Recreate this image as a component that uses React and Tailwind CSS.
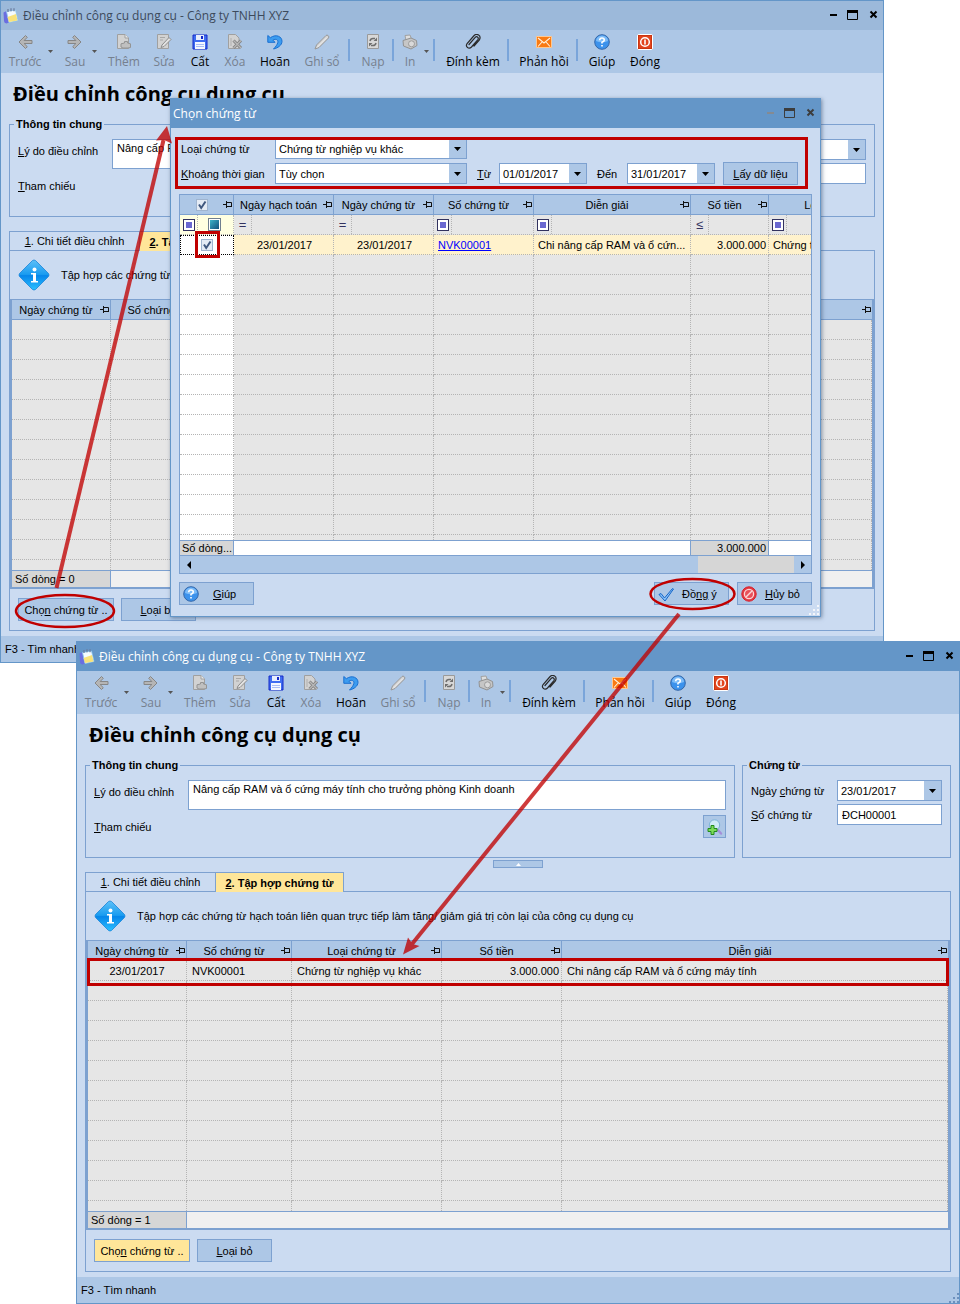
import React from 'react'

const ui = "font-['Liberation_Sans',Arial,sans-serif] text-[11px] leading-4"
const segoe = "font-['Open_Sans','Noto_Sans',sans-serif]"

// toolbar glyphs, all drawn on a 16x16 grid
const icons = {
  back: <path d="M8.5 1.5 2 8l6.5 6.5 1.8-1.8-3.2-3.2H15V6.5H7.1l3.2-3.2z" fill="#b5b5b5" stroke="#868686" strokeLinejoin="round" />,
  next: <path d="M7.5 1.5 14 8l-6.5 6.5-1.8-1.8 3.2-3.2H1V6.5h7.9L5.7 3.3z" fill="#b5b5b5" stroke="#868686" strokeLinejoin="round" />,
  add: (
    <>
      <path d="M1.5.5h7.500l3.500 3.500v10.500h-11z" fill="#d2d2d2" stroke="#a0a0a0" />
      <path d="M9 .5V4h3.500" fill="#ececec" stroke="#a0a0a0" />
      <path d="M8.500 7.500h3V9l3 .8v3.700l-2.500.5H7l-2-1V9.800L8.500 9z" fill="#c0c0c0" stroke="#949494" strokeLinejoin="round" />
    </>
  ),
  edit: (
    <>
      <path d="M1.5.5h11v14h-11z" fill="#d2d2d2" stroke="#a0a0a0" />
      <path d="M4 3.500h5M4 6h3" stroke="#a8a8a8" />
      <path d="m6 11 7-7.500 2 2L8 12.500l-3 1z" fill="#e2e2e2" stroke="#8c8c8c" />
    </>
  ),
  save: (
    <>
      <path d="M1 1h14v14H1z" fill="#3f6df0" stroke="#1428c8" />
      <path d="M4 1h8v5H4z" fill="#e8eefc" />
      <path d="M9 2h2v3H9z" fill="#1428c8" />
      <path d="M3 8h10v7H3z" fill="#f4f7ff" />
      <path d="M4 10.500h8M4 12.500h8" stroke="#a9bdf5" />
    </>
  ),
  remove: (
    <>
      <path d="M1.500.5h7l3.500 3.500v10.500H1.500z" fill="#d2d2d2" stroke="#a0a0a0" />
      <path d="M4 4v8" stroke="#b0b0b0" />
      <path d="m6.500 6.500 7.500 7.500M14 6.500 6.500 14" stroke="#828282" strokeWidth="3" />
      <path d="m6.500 6.500 7.500 7.500M14 6.500 6.500 14" stroke="#b8b8b8" strokeWidth="1.200" />
    </>
  ),
  undo: <path d="M.8 1.500v6.800H8L5.900 6.200C8.500 4.500 11.500 5.500 10.800 8.500c-.5 2.300-2.200 4.200-4.300 6.500C11 14 14.800 11.200 15 7.500 15.200 2.500 9-.3 3.400 3.700z" fill="#3c9cf0" stroke="#1a6fd0" strokeLinejoin="round" />,
  pencil: (
    <>
      <path d="m1 15 1.500-4L12 1.500q1-1 2.200.2T14.500 4L5 13.500z" fill="#d4d4d4" stroke="#989898" />
      <path d="m3 13.500 10-10" stroke="#f0f0f0" />
    </>
  ),
  reload: (
    <>
      <path d="M2.500.5h11v14h-11z" fill="#d8d8d8" stroke="#9a9a9a" />
      <path d="M5 7q.5-2.500 3-2.500h2M11 9q-.5 2.500-3 2.500H6" fill="none" stroke="#6e6e6e" strokeWidth="1.500" />
      <path d="M8.500 7H12V3.500zM7.500 9H4v3.500z" fill="#6e6e6e" />
    </>
  ),
  print: (
    <>
      <path d="M3 1.500 8 1l1.500 4L4 6.500z" fill="#dedede" stroke="#a2a2a2" />
      <path d="M1 6.500 9 4l5.500 2.500.5 5-6 3.500-7.500-3z" fill="#c6c6c6" stroke="#929292" strokeLinejoin="round" />
      <circle cx="9.500" cy="9.800" r="3" fill="#dadada" stroke="#9c9c9c" />
    </>
  ),
  clip: (
    <path d="M4 10.500 10 3.600q1.500-1.500 2.700-.4t0 2.600L6.500 13q-2 2-4 .5t-.4-4L8.700 2Q11-.6 13.600 1t.6 5.200L9 12" fill="none" stroke="#2a2a2a" strokeWidth="1.200" strokeLinecap="round" />
  ),
  mail: (
    <>
      <path d="M.5 2.500h15v11H.5z" fill="#f97a12" stroke="#ffc890" />
      <path d="m2 4 6 5 6-5M2 12.500l4-4.500M14 12.500 10 8" fill="none" stroke="#fff0dc" strokeWidth="1.100" />
    </>
  ),
  help: (
    <>
      <circle cx="8" cy="8" r="7.300" fill="#3c92ec" stroke="#3567a8" />
      <path d="M2 7a6 5.500 0 0 1 12 0q-6 2.500-12 0" fill="#7dbcf8" />
      <path d="M5.700 6.200Q5.800 4 8 4t2.300 2Q10.300 7.300 8 8.200V9.600M8 11v1.500" fill="none" stroke="#fff" strokeWidth="1.600" />
    </>
  ),
  close: (
    <>
      <rect x=".5" y=".5" width="15" height="15" rx="1.500" fill="#e2441c" stroke="#fff" />
      <rect x="1.500" y="1.500" width="13" height="13" fill="none" stroke="#c93512" />
      <circle cx="8" cy="8" r="4.300" fill="none" stroke="#fff" strokeWidth="1.500" />
      <path d="M8 5.500v5" stroke="#fff" strokeWidth="1.600" />
    </>
  ),
  tick: <path d="m1 8.500 2-1L6.500 12 14.500 2.500 15.500 3 7 15z" fill="#8cc4f8" stroke="#1464c8" strokeLinejoin="round" />,
  deny: (
    <>
      <circle cx="8" cy="8" r="7.200" fill="#e23a42" stroke="#d8202c" />
      <circle cx="8" cy="8" r="4.600" fill="#e8505a" stroke="#fbd5d8" strokeWidth="1.300" />
      <path d="m5 11 6-6" stroke="#fbd5d8" strokeWidth="1.500" />
    </>
  ),
  find: (
    <>
      <path d="m10.500 10.500 3.500 4" stroke="#a58fd8" strokeWidth="2.400" strokeLinecap="round" />
      <circle cx="7.500" cy="6" r="5.200" fill="#cfeaf8" stroke="#7fb4d8" />
      <path d="M4 6.500h3v3h3v3H7v3H4v-3H1v-3h3z" fill="#7ddc5a" stroke="#228a1c" />
    </>
  ),
  app: (
    <>
      <path d="M.5 4.500 3.500 3l2.500 11.500-2.500 1Q1 15 1 13z" fill="#6a6ee0" />
      <path d="m3.500 3.500 9-1.500 2.500 10.500-9 2z" fill="#f4fbff" stroke="#8ac4ee" strokeWidth=".8" />
      <path d="M4.500 9 13 6l1.500 6.500-8.500 1.500z" fill="#f8e27a" />
      <path d="M5 1v3M8 .3v3M11 .3v3" stroke="#6a7a9c" strokeWidth="1.200" />
    </>
  ),
}

function Icon({ name, className = '' }) {
  return <svg viewBox="0 0 16 16" className={`h-4 w-4 shrink-0 ${className}`} fill="none" aria-hidden="true">{icons[name]}</svg>
}

const tools = [
  { label: 'Trước', icon: 'back', off: true, cls: 'ml-1 w-10' },
  { caret: true, cls: 'ml-px' },
  { label: 'Sau', icon: 'next', off: true, cls: 'ml-1.5 w-[30px]' },
  { caret: true, cls: '' },
  { label: 'Thêm', icon: 'add', off: true, cls: 'ml-1.5 w-10' },
  { label: 'Sửa', icon: 'edit', off: true, cls: 'ml-1 w-8' },
  { label: 'Cất', icon: 'save', cls: 'ml-1 w-8' },
  { label: 'Xóa', icon: 'remove', off: true, cls: 'ml-1 w-[30px]' },
  { label: 'Hoãn', icon: 'undo', cls: 'ml-[5px] w-10' },
  { label: 'Ghi sổ', icon: 'pencil', off: true, cls: 'ml-[7px] w-10' },
  { sep: true, cls: 'ml-1.5' },
  { label: 'Nạp', icon: 'reload', off: true, cls: 'ml-2 w-[30px]' },
  { sep: true, cls: 'ml-1' },
  { label: 'In', icon: 'print', off: true, cls: 'ml-1.5 w-5' },
  { caret: true, cls: 'ml-0.5' },
  { sep: true, cls: 'ml-[3px]' },
  { label: 'Đính kèm', icon: 'clip', cls: 'ml-[11px] w-[54px]' },
  { sep: true, cls: 'ml-[7px]' },
  { label: 'Phản hồi', icon: 'mail', cls: 'ml-2.5 w-[50px]' },
  { sep: true, cls: 'ml-[7px]' },
  { label: 'Giúp', icon: 'help', cls: 'ml-2 w-8' },
  { label: 'Đóng', icon: 'close', cls: 'ml-[11px] w-8' },
]

function Toolbar() {
  return (
    <div className="flex h-[43px] bg-[#adc7e6] pt-1">
      {tools.map((t, i) => {
        if (t.sep) return <span key={i} className={`mt-[5px] h-[22px] w-0.5 bg-[#7aa5da] ${t.cls}`} />
        if (t.caret) {
          return (
            <button key={i} aria-label="Mở danh sách" className={`flex h-8 w-2 items-center justify-center pt-0.5 ${t.cls}`}>
              <svg viewBox="0 0 5 3" className="h-[3px] w-[5px]"><path d="M0 0h5L2.500 3z" fill="#555" /></svg>
            </button>
          )
        }
        return (
          <button key={i} disabled={t.off} className={`flex flex-col items-center ${t.cls} ${t.off ? 'text-[#76808e]' : 'text-black'}`}>
            <Icon name={t.icon} />
            <span className={`whitespace-nowrap text-[12px] leading-6 ${segoe}`}>{t.label}</span>
          </button>
        )
      })}
    </div>
  )
}

function WindowButtons({ dim }) {
  return (
    <div className={`flex items-center gap-[9px] pr-[3px] pb-0.5 ${dim ? 'text-[#3c3c3c]' : 'text-black'}`}>
      <button aria-label="Thu nhỏ" className={`h-3 w-2 ${dim ? 'text-[#848a92]' : ''}`}>
        <svg viewBox="0 0 8 12" className="h-3 w-2"><path d="M0 6h7" stroke="currentColor" strokeWidth="2" /></svg>
      </button>
      <button aria-label="Phóng to" className="h-3 w-3">
        <svg viewBox="0 0 12 12" className="h-3 w-3"><path d="M.5 1.500h10v9H.5z" fill="none" stroke="currentColor" /><path d="M0 2.500h11" stroke="currentColor" strokeWidth="3" /></svg>
      </button>
      <button aria-label="Đóng cửa sổ" className="h-3 w-3">
        <svg viewBox="0 0 12 12" className="h-3 w-3"><path d="m2.500 2.500 6 6M8.500 2.500l-6 6" stroke="currentColor" strokeWidth="2" /></svg>
      </button>
    </div>
  )
}

function Pin() {
  return (
    <svg viewBox="0 0 10 9" className="h-[9px] w-[10px] shrink-0" fill="none" stroke="#111" aria-hidden="true">
      <path d="M0 4.500h3M3.500 1v7M3.500 2.500h5v4h-5M4 6.500h5" />
    </svg>
  )
}

function HeadCell({ children, className = '' }) {
  return (
    <th scope="col" className={`h-5 overflow-hidden border-r border-b border-[#7da1d0] bg-[#adc7e6] p-0 font-normal ${className}`}>
      <div className="flex h-[19px] items-center">
        <span className="flex flex-1 items-center justify-center whitespace-nowrap">{children}</span>
        <Pin />
      </div>
    </th>
  )
}

function Combo({ id, options, className }) {
  return (
    <div className={`relative ${className}`}>
      <select id={id} className="block h-[21px] w-full appearance-none border border-[#7da1d0] bg-white pl-[3px] leading-4">
        {options.map(o => <option key={o}>{o}</option>)}
      </select>
      <span className="pointer-events-none absolute top-px right-px bottom-px flex w-[17px] items-center justify-center bg-[#adc7e6]">
        <svg viewBox="0 0 7 4" className="h-1 w-[7px]"><path d="M0 0h7L3.500 4z" /></svg>
      </span>
    </div>
  )
}

function PushButton({ children, className = '', ...rest }) {
  return (
    <button {...rest} className={`flex h-[23px] items-center border border-[#7da1d0] whitespace-nowrap ${className}`}>{children}</button>
  )
}

function Grip({ className }) {
  return (
    <svg viewBox="0 0 12 12" className={`pointer-events-none absolute h-3 w-3 ${className}`} aria-hidden="true">
      <path d="M9 1h2v2H9zM9 5h2v2H9zM5 5h2v2H5zM9 9h2v2H9zM5 9h2v2H5zM1 9h2v2H1z" fill="currentColor" />
    </svg>
  )
}

const dot = 'border-r border-b border-dotted border-[#b4b4b4]'
const cell = `h-5 overflow-hidden py-0 pr-0.5 whitespace-nowrap ${dot}`

function VoucherTable({ rows }) {
  const blank = 13 - rows.length
  return (
    <div className="border-x-2 border-t border-b-2 border-[#7da1d0]">
      <table className="w-full table-fixed border-separate border-spacing-0 bg-[#e6e6e6]">
        <colgroup>
          <col className="w-[99px]" />
          <col className="w-[105px]" />
          <col className="w-[150px]" />
          <col className="w-[120px]" />
          <col />
        </colgroup>
        <thead>
          <tr>
            <HeadCell>Ngày chứng từ</HeadCell>
            <HeadCell>Số chứng từ</HeadCell>
            <HeadCell>Loại chứng từ</HeadCell>
            <HeadCell>Số tiền</HeadCell>
            <HeadCell className="border-r-0">Diễn giải</HeadCell>
          </tr>
        </thead>
        <tbody>
          {rows.map(r => (
            <tr key={r.no}>
              <td className={`pl-0.5 text-center ${cell}`}>{r.date}</td>
              <td className={`pl-[5px] ${cell}`}>{r.no}</td>
              <td className={`pl-[5px] ${cell}`}>{r.type}</td>
              <td className={`pl-[5px] text-right ${cell}`}>{r.amount}</td>
              <td className={`pl-[5px] ${cell}`}>{r.note}</td>
            </tr>
          ))}
          {Array.from({ length: blank }, (_, i) => {
            // the bottom row is only half visible above the footer
            const h = i === blank - 1 ? 'h-2.5 border-b-0' : 'h-5'
            return (
              <tr key={i}>
                {[0, 1, 2, 3, 4].map(c => <td key={c} className={`p-0 ${dot} ${h}`} />)}
              </tr>
            )
          })}
        </tbody>
        <tfoot>
          <tr>
            <td className="h-[17px] border-t border-r border-[#7da1d0] bg-[#d6d6d6] p-0 pl-[3px]">Số dòng = {rows.length}</td>
            <td colSpan={4} className="border-t border-[#7da1d0] bg-[#f0f0f0] p-0" />
          </tr>
        </tfoot>
      </table>
    </div>
  )
}

function InfoIcon({ id }) {
  return (
    <svg viewBox="0 0 32 32" className="h-8 w-8 shrink-0" aria-hidden="true">
      <defs>
        <linearGradient id={id} x1="0" y1="0" x2="0" y2="1">
          <stop offset="0" stopColor="#5cc0f8" />
          <stop offset=".48" stopColor="#1a9cf0" />
          <stop offset=".52" stopColor="#0686ea" />
          <stop offset="1" stopColor="#2cc0ff" />
        </linearGradient>
      </defs>
      <path d="M14.500 1.500q1.500-1 3 0l13 13q1 1.500 0 3l-13 13q-1.500 1-3 0l-13-13q-1-1.500 0-3z" fill={`url(#${id})`} stroke="#1a84d8" strokeWidth=".8" />
      <circle cx="16.500" cy="10.500" r="2" fill="#fff" />
      <path d="M13 14h5v8h2v1.500h-7V22h2v-6.500h-2z" fill="#fff" />
    </svg>
  )
}

function AdjustWindow({ id, active, rows, className = '' }) {
  return (
    <section className={`border border-[#6496c8] bg-[#cbdbf1] ${className}`}>
      <header className={`flex h-[29px] items-center ${active ? 'bg-[#6496c8] text-white' : 'bg-[#9cb9da] text-[#3c4a5c]'}`}>
        <Icon name="app" className="ml-0.5" />
        <span className={`ml-1 flex-1 text-[12px] ${segoe}`}>Điều chỉnh công cụ dụng cụ - Công ty TNHH XYZ</span>
        <WindowButtons />
      </header>
      <Toolbar />
      <div className="px-2 pb-[5px]">
        <h1 className={`flex h-[43px] items-center pb-0.5 pl-1 text-[20px] font-bold ${segoe}`}>Điều chỉnh công cụ dụng cụ</h1>
        <div className="flex gap-[7px]">
          <fieldset className="min-w-0 flex-1 border border-[#7da1d0] px-2 pb-[19px]">
            <legend className="-ml-1 h-4 px-0.5 font-bold">Thông tin chung</legend>
            <div className="flex pt-[7px]">
              <label htmlFor={`${id}-reason`} className="w-[94px] pt-1"><u>L</u>ý do điều chỉnh</label>
              <textarea id={`${id}-reason`} className="block h-[30px] min-w-0 flex-1 resize-none border border-[#7da1d0] bg-white pl-1" defaultValue="Nâng cấp RAM và ổ cứng máy tính cho trưởng phòng Kinh doanh" />
            </div>
            <div className="flex items-center justify-between pt-[5px]">
              <span><u>T</u>ham chiếu</span>
              <PushButton aria-label="Tìm tham chiếu" className="w-[23px] justify-center bg-[#adc7e6]"><Icon name="find" /></PushButton>
            </div>
          </fieldset>
          <fieldset className="w-[209px] border border-[#7da1d0] px-2">
            <legend className="-ml-1 h-4 px-0.5 font-bold">Chứng từ</legend>
            <div className="flex items-center pt-[7px]">
              <label htmlFor={`${id}-date`} className="flex-1">Ngày <u>c</u>hứng từ</label>
              <Combo id={`${id}-date`} options={['23/01/2017']} className="w-[105px]" />
            </div>
            <div className="flex items-center pt-[3px]">
              <label htmlFor={`${id}-no`} className="flex-1"><u>S</u>ố chứng từ</label>
              <input id={`${id}-no`} className="h-[21px] w-[105px] border border-[#7da1d0] bg-white pl-1" defaultValue="ĐCH00001" />
            </div>
          </fieldset>
        </div>
        <button aria-label="Thu gọn" className="mx-auto mt-0.5 flex h-2 w-[50px] items-center justify-center border border-[#7da1d0] bg-[#adc7e6]">
          <svg viewBox="0 0 5 3" className="h-[3px] w-[5px]"><path d="M0 3h5L2.500 0z" fill="#fff" /></svg>
        </button>
        <div className="mt-1 flex h-[19px]" role="tablist">
          <button role="tab" aria-selected="false" className="w-[130px] border-t border-l border-[#7da1d0]"><u>1</u>. Chi tiết điều chỉnh</button>
          <button role="tab" aria-selected="true" className="-mb-px w-[129px] border border-b-0 border-[#7da1d0] bg-[#ffe699] font-bold"><u>2</u>. Tập hợp chứng từ</button>
        </div>
        <div className="border border-[#7da1d0] pb-[9px]" role="tabpanel">
          <div className="flex h-12 items-center gap-[11px] pl-2">
            <InfoIcon id={`${id}-info`} />
            <p>Tập hợp các chứng từ hạch toán liên quan trực tiếp làm tăng/ giảm giá trị còn lại của công cụ dụng cụ</p>
          </div>
          <VoucherTable rows={rows} />
          <div className="flex gap-[7px] px-2 pt-[9px]">
            <PushButton className={`w-24 justify-center ${active ? 'bg-[#ffe699]' : 'bg-[#adc7e6]'}`}><span>Chọ<u>n</u> chứng từ ..</span></PushButton>
            <PushButton className="w-[75px] justify-center bg-[#adc7e6]"><span><u>L</u>oại bỏ</span></PushButton>
          </div>
        </div>
      </div>
      <footer className="flex h-[26px] items-center bg-[#adc7e6] pl-1">F3 - Tìm nhanh</footer>
    </section>
  )
}

function FilterOp({ op }) {
  return (
    <div className="flex h-[19px] items-center">
      <span className="flex h-full w-[18px] items-center justify-center border-r border-dotted border-[#b4b4b4] text-[#32325f]">
        {op
          ? <span className="text-[13px]">{op}</span>
          : <span className="h-3 w-3 border border-[#32325f] bg-white p-0.5"><span className="block h-full bg-[#6a68d0]" /></span>}
      </span>
    </div>
  )
}

function Check({ label }) {
  return (
    <span className="relative block h-3 w-3">
      <input type="checkbox" defaultChecked aria-label={label} className="peer block h-3 w-3 appearance-none border border-[#9fb4cf] bg-[#e4ebf5]" />
      <svg viewBox="0 0 12 12" className="pointer-events-none absolute inset-0 hidden h-3 w-3 peer-checked:block" fill="none">
        <path d="m3 5.500 2.200 3.500L9.500 2.500" stroke="#40587f" strokeWidth="2" />
      </svg>
    </span>
  )
}

function PickTable() {
  const row = `bg-[#fff2cc] pl-1 ${cell}`
  return (
    <div className="border border-[#7da1d0]">
      <div className="overflow-hidden">
        <table className="w-[739px] min-w-full table-fixed border-separate border-spacing-0 bg-[#e6e6e6]">
          <colgroup>
            <col className="w-[54px]" />
            <col className="w-[100px]" />
            <col className="w-[100px]" />
            <col className="w-[100px]" />
            <col className="w-[157px]" />
            <col className="w-[78px]" />
            <col />
          </colgroup>
          <thead>
            <tr>
              <HeadCell><Check label="Chọn tất cả" /></HeadCell>
              <HeadCell>Ngày hạch toán</HeadCell>
              <HeadCell>Ngày chứng từ</HeadCell>
              <HeadCell>Số chứng từ</HeadCell>
              <HeadCell>Diễn giải</HeadCell>
              <HeadCell>Số tiền</HeadCell>
              <HeadCell>Loại chứng từ</HeadCell>
            </tr>
          </thead>
          <tbody>
            <tr>
              <td className={`h-5 bg-[#ffffe1] p-0 ${dot}`}>
                <div className="flex items-center gap-2.5">
                  <FilterOp />
                  <span className="h-[13px] w-[13px] border border-[#6f7f8f] bg-white p-px"><span className="block h-full bg-linear-to-br from-[#3fb4c8] to-[#14507c]" /></span>
                </div>
              </td>
              <td className={`h-5 p-0 ${dot}`}><FilterOp op="=" /></td>
              <td className={`h-5 p-0 ${dot}`}><FilterOp op="=" /></td>
              <td className={`h-5 p-0 ${dot}`}><FilterOp /></td>
              <td className={`h-5 p-0 ${dot}`}><FilterOp /></td>
              <td className={`h-5 p-0 ${dot}`}><FilterOp op="≤" /></td>
              <td className={`h-5 p-0 ${dot}`}><FilterOp /></td>
            </tr>
            <tr>
              <td className="h-5 border border-dotted border-black bg-white p-0">
                <div className="relative flex justify-center">
                  <Check label="Chọn NVK00001" />
                  <span className="pointer-events-none absolute -top-2 h-[27px] w-[25px] border-3 border-[#c00000]" />
                </div>
              </td>
              <td className={`text-center ${row}`}>23/01/2017</td>
              <td className={`text-center ${row}`}>23/01/2017</td>
              <td className={row}><a href="#nvk00001" className="text-[#0000ff] underline">NVK00001</a></td>
              <td className={row}>Chi nâng cấp RAM và ổ cứn...</td>
              <td className={`text-right ${row}`}>3.000.000</td>
              <td className={row}>Chứng từ nghiệp vụ khác</td>
            </tr>
            {Array.from({ length: 15 }, (_, i) => {
              const h = i === 14 ? 'h-[5px] border-b-0' : 'h-5'
              return (
                <tr key={i}>
                  {[0, 1, 2, 3, 4, 5, 6].map(c => <td key={c} className={`p-0 ${dot} ${h} ${c === 0 ? 'bg-white' : ''}`} />)}
                </tr>
              )
            })}
          </tbody>
          <tfoot className="leading-[14px]">
            <tr>
              <td className="h-[15px] border-t border-r border-[#7da1d0] bg-[#d6d6d6] p-0 pl-0.5 whitespace-nowrap">Số dòng...</td>
              <td colSpan={4} className="border-t border-r border-[#7da1d0] bg-white p-0" />
              <td className="border-t border-r border-[#7da1d0] bg-[#d6d6d6] p-0 pr-0.5 text-right">3.000.000</td>
              <td className="border-t border-[#7da1d0] bg-white p-0" />
            </tr>
          </tfoot>
        </table>
      </div>
      <div className="flex h-[18px] items-center justify-between border-t border-[#7da1d0] bg-[#adc7e6]">
        <button aria-label="Cuộn trái" className="flex w-[17px] justify-center"><svg viewBox="0 0 4 8" className="h-2 w-1"><path d="M4 0v8L0 4z" /></svg></button>
        <span className="ml-auto h-full w-24 bg-[#d6d6d6]" />
        <button aria-label="Cuộn phải" className="flex w-[17px] justify-center"><svg viewBox="0 0 4 8" className="h-2 w-1"><path d="M0 0v8l4-4z" /></svg></button>
      </div>
    </div>
  )
}

function PickDialog({ className }) {
  return (
    <section role="dialog" aria-label="Chọn chứng từ" className={`border border-[#6496c8] bg-[#cbdbf1] shadow-[1px_1px_4px_rgba(60,80,110,0.6)] ${className}`}>
      <header className="flex h-[29px] items-center bg-[#6496c8] text-white">
        <span className={`ml-0.5 flex-1 text-[12px] ${segoe}`}>Chọn chứng từ</span>
        <WindowButtons dim />
      </header>
      <div className="px-2 pb-[11px]">
        <form className="relative pt-2.5 pl-0.5" onSubmit={e => e.preventDefault()}>
          <div className="flex items-center">
            <label htmlFor="kind" className="w-[94px]">Loại chứng từ</label>
            <Combo id="kind" options={['Chứng từ nghiệp vụ khác']} className="w-48" />
          </div>
          <div className="flex items-center pt-[3px]">
            <label htmlFor="range" className="w-[94px] whitespace-nowrap"><u>K</u>hoảng thời gian</label>
            <Combo id="range" options={['Tùy chọn']} className="w-48" />
            <label htmlFor="from" className="ml-2.5 w-[22px]"><u>T</u>ừ</label>
            <Combo id="from" options={['01/01/2017']} className="w-[88px]" />
            <label htmlFor="to" className="ml-2.5 w-[30px]">Đến</label>
            <Combo id="to" options={['31/01/2017']} className="w-[88px]" />
            <PushButton className="ml-2 w-[75px] justify-center bg-[#adc7e6]"><span><u>L</u>ấy dữ liệu</span></PushButton>
          </div>
          <span className="pointer-events-none absolute top-[9px] right-1 -bottom-1 -left-1 border-3 border-[#c00000]" />
        </form>
        <div className="pt-[9px]"><PickTable /></div>
        <div className="flex gap-2 pt-2">
          <PushButton className="mr-auto w-[75px] gap-3.5 bg-[#adc7e6] pl-[3px]"><Icon name="help" /><span><u>G</u>iúp</span></PushButton>
          <PushButton className="w-[75px] gap-2 bg-[#adc7e6] pl-[3px]"><Icon name="tick" /><span>Đồ<u>ng</u> ý</span></PushButton>
          <PushButton className="w-[75px] gap-2 bg-[#adc7e6] pl-[3px]"><Icon name="deny" /><span><u>H</u>ủy bỏ</span></PushButton>
        </div>
      </div>
      <Grip className="right-0 bottom-0 text-[#f4f6fa]" />
    </section>
  )
}

// red guide marks that link the three windows
function Marks() {
  return (
    <svg viewBox="0 0 960 1304" className="pointer-events-none absolute top-0 left-0 h-[1304px] w-[960px]" fill="none" aria-hidden="true">
      <ellipse cx="65" cy="611" rx="49" ry="16" stroke="#c00000" strokeWidth="2.500" />
      <ellipse cx="692.500" cy="594" rx="42" ry="15" stroke="#c00000" strokeWidth="2.500" />
      <g opacity=".77">
        <path d="M56.500 588 163.500 140" stroke="#c00000" strokeWidth="4" />
        <path d="m167 126 5 17.500-8-3.500-8 .5z" fill="#c00000" />
        <path d="M679 614 412 944" stroke="#c00000" strokeWidth="4" />
        <path d="m403 954.500 5-17 4.500 6.500 7 2z" fill="#c00000" />
      </g>
    </svg>
  )
}

const saved = [
  { date: '23/01/2017', no: 'NVK00001', type: 'Chứng từ nghiệp vụ khác', amount: '3.000.000', note: 'Chi nâng cấp RAM và ổ cứng máy tính' },
]

export default function App() {
  return (
    <main className={`relative bg-white pt-[641px] pl-[76px] text-black ${ui}`}>
      <AdjustWindow id="before" rows={[]} className="absolute top-0 right-[76px] left-0" />
      <PickDialog className="absolute top-[98px] right-[139px] left-[170px]" />
      <div className="relative">
        <AdjustWindow id="after" active rows={saved} />
        <Grip className="right-0 bottom-0 text-[#6d90bd]" />
        <span className="pointer-events-none absolute top-[317px] right-[11px] left-[11px] h-7 border-3 border-[#c00000]" />
      </div>
      <Marks />
    </main>
  )
}
